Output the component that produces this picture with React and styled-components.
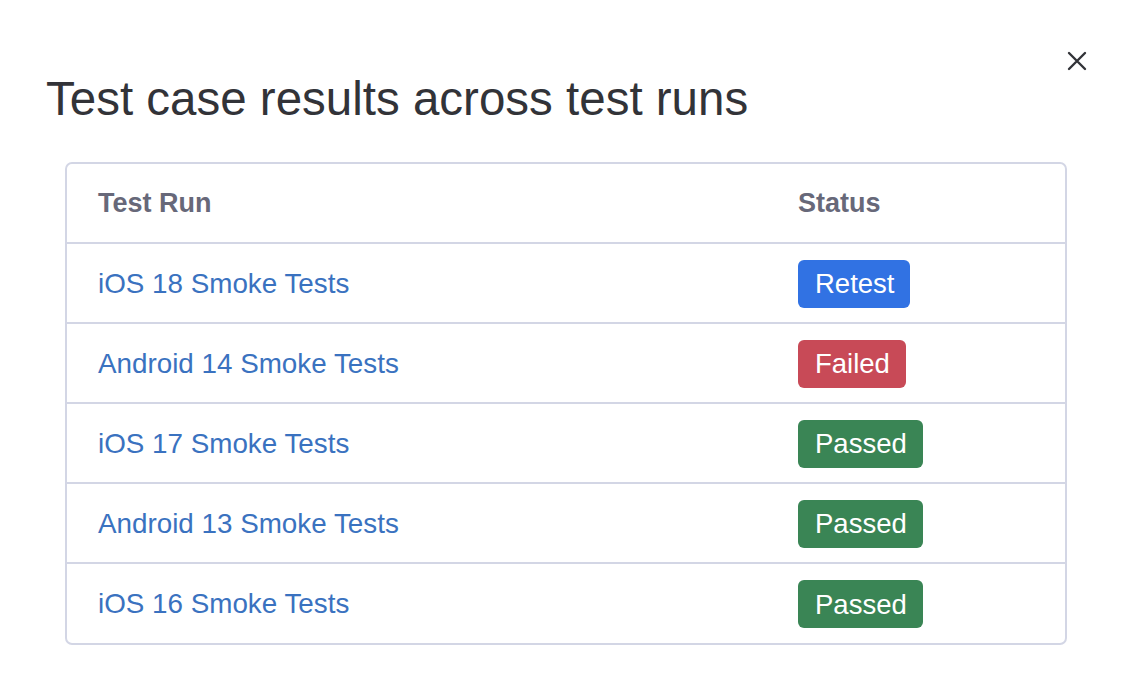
import React from "react";
import styled, { createGlobalStyle } from "styled-components";

const Global = createGlobalStyle`
  html, body { margin: 0; padding: 0; background: #ffffff; }
  body { font-family: "Liberation Sans", Arial, Helvetica, sans-serif; }
  * { box-sizing: border-box; }
`;

const Dialog = styled.div`
  width: 1138px;
  height: 688px;
  padding: 46px 46px 0 46px;
  background: #fff;
  display: flex;
  flex-direction: column;
`;

const Header = styled.div`
  display: flex;
  justify-content: space-between;
  align-items: flex-start;
`;

const Title = styled.h1`
  margin: 24px 0 0 0;
  font-size: 47.5px;
  line-height: 1.2;
  font-weight: 400;
  color: #323338;
`;

const Close = styled.button`
  border: none;
  background: transparent;
  padding: 0;
  width: 26px;
  height: 26px;
  margin-right: 2px;
  margin-top: 2px;
  display: flex;
  align-items: center;
  justify-content: center;
  cursor: pointer;
  color: #323338;
`;

const TableCard = styled.div`
  margin: 35px 25px 0 19px;
  border: 2px solid #d3d6e5;
  border-radius: 7px;
  overflow: hidden;
`;

const Table = styled.table`
  width: 100%;
  border-collapse: collapse;
  table-layout: fixed;
`;

const HeadCell = styled.th`
  height: 79px;
  padding: 0 0 0 31px;
  text-align: left;
  font-size: 27px;
  font-weight: 700;
  color: #676879;
  width: ${(p) => p.$w || "auto"};
`;

const Row = styled.tr`
  border-top: 2px solid #d3d6e5;
`;

const Cell = styled.td`
  height: 80px;
  padding: 1px 0 0 31px;
  vertical-align: middle;
  font-size: 27.8px;
`;

const Link = styled.a`
  color: #3a72c0;
  text-decoration: none;
`;

const tones = {
  Retest: "#3172e3",
  Failed: "#c84a57",
  Passed: "#3a8555",
};

const Badge = styled.span`
  display: inline-flex;
  align-items: center;
  height: 48px;
  padding: 1px 16px 0 17px;
  border-radius: 6px;
  background: ${(p) => tones[p.$status]};
  color: #fff;
  font-size: 27.5px;
`;

const rows = [
  ["iOS 18 Smoke Tests", "Retest"],
  ["Android 14 Smoke Tests", "Failed"],
  ["iOS 17 Smoke Tests", "Passed"],
  ["Android 13 Smoke Tests", "Passed"],
  ["iOS 16 Smoke Tests", "Passed"],
];

export default function App() {
  return (
    <>
      <Global />
      <Dialog>
        <Header>
          <Title>Test case results across test runs</Title>
          <Close aria-label="Close">
            <svg width="20" height="20" viewBox="0 0 20 20">
              <path d="M2 2 L18 18 M18 2 L2 18" stroke="#323338" strokeWidth="2.4" strokeLinecap="round" />
            </svg>
          </Close>
        </Header>
        <TableCard>
          <Table>
            <thead>
              <tr>
                <HeadCell $w="700px">Test Run</HeadCell>
                <HeadCell>Status</HeadCell>
              </tr>
            </thead>
            <tbody>
              {rows.map(([name, status], i) => (
                <Row key={i}>
                  <Cell>
                    <Link href="#">{name}</Link>
                  </Cell>
                  <Cell>
                    <Badge $status={status}>{status}</Badge>
                  </Cell>
                </Row>
              ))}
            </tbody>
          </Table>
        </TableCard>
      </Dialog>
    </>
  );
}
